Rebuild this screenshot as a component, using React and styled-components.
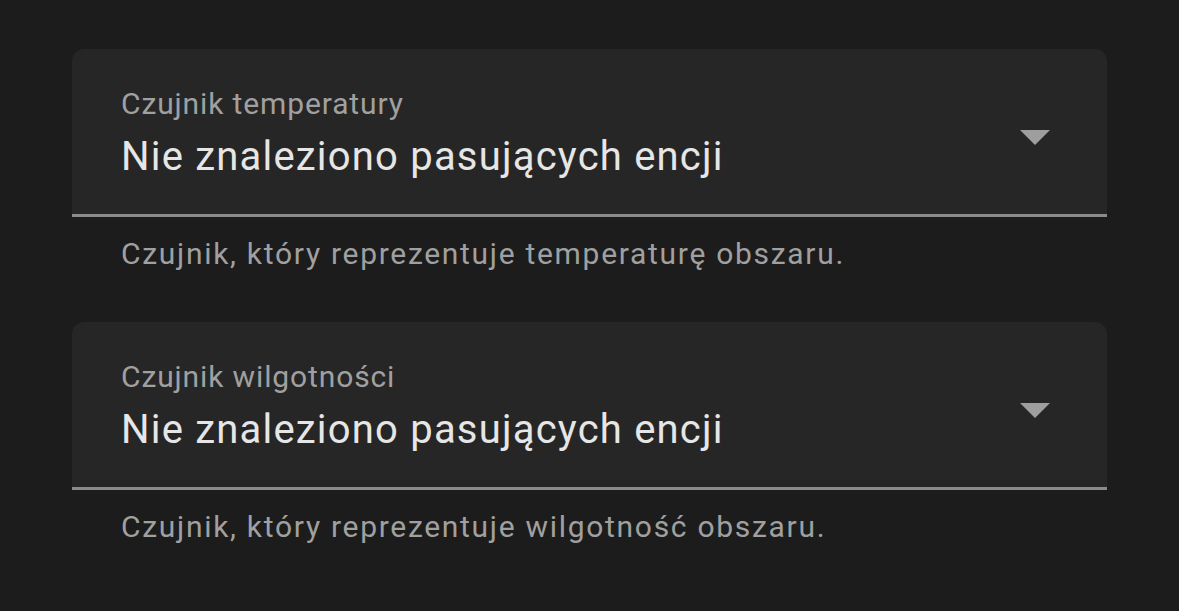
import React from "react";
import styled, { createGlobalStyle } from "styled-components";

const GlobalStyle = createGlobalStyle`
  html, body {
    margin: 0;
    padding: 0;
    background: #1c1c1c;
  }
  body {
    font-family: Roboto, "Noto Sans", "Liberation Sans", sans-serif;
    -webkit-font-smoothing: antialiased;
  }
`;

const Page = styled.div`
  min-height: 611px;
  box-sizing: border-box;
  padding: 49px 72px 0;
  display: flex;
  flex-direction: column;
`;

const Field = styled.div`
  display: flex;
  flex-direction: column;
  height: 273px;
`;

const SelectBox = styled.div`
  box-sizing: border-box;
  height: 168px;
  background: #262626;
  border-radius: 12px 12px 0 0;
  border-bottom: 3px solid #8b8b8b;
  padding: 0 57px 0 49px;
  display: flex;
  align-items: flex-start;
`;

const Texts = styled.div`
  flex: 1;
  display: flex;
  flex-direction: column;
  padding-top: 41px;
`;

const Label = styled.div`
  font-size: 30px;
  line-height: 28px;
  color: #a0a0a0;
  letter-spacing: 0.87px;
`;

const Value = styled.div`
  margin-top: 19px;
  font-size: 40px;
  line-height: 40px;
  color: #e6e6e6;
  letter-spacing: 1.2px;
`;

const Arrow = styled.svg`
  margin-top: 81px;
  width: 30px;
  height: 15px;
  flex: none;
`;

const Helper = styled.div`
  padding: 23px 0 0 49px;
  font-size: 30px;
  line-height: 28px;
  color: #a0a0a0;
  letter-spacing: 1.7px;
`;

const fields = [
  {
    label: "Czujnik temperatury",
    value: "Nie znaleziono pasujących encji",
    helper: "Czujnik, który reprezentuje temperaturę obszaru.",
  },
  {
    label: "Czujnik wilgotności",
    value: "Nie znaleziono pasujących encji",
    helper: "Czujnik, który reprezentuje wilgotność obszaru.",
  },
];

export default function App() {
  return (
    <>
      <GlobalStyle />
      <Page>
        {fields.map((f) => (
          <Field key={f.label}>
            <SelectBox>
              <Texts>
                <Label>{f.label}</Label>
                <Value>{f.value}</Value>
              </Texts>
              <Arrow viewBox="0 0 10 5">
                <polygon points="0,0 10,0 5,5" fill="#9e9e9e" />
              </Arrow>
            </SelectBox>
            <Helper>{f.helper}</Helper>
          </Field>
        ))}
      </Page>
    </>
  );
}
